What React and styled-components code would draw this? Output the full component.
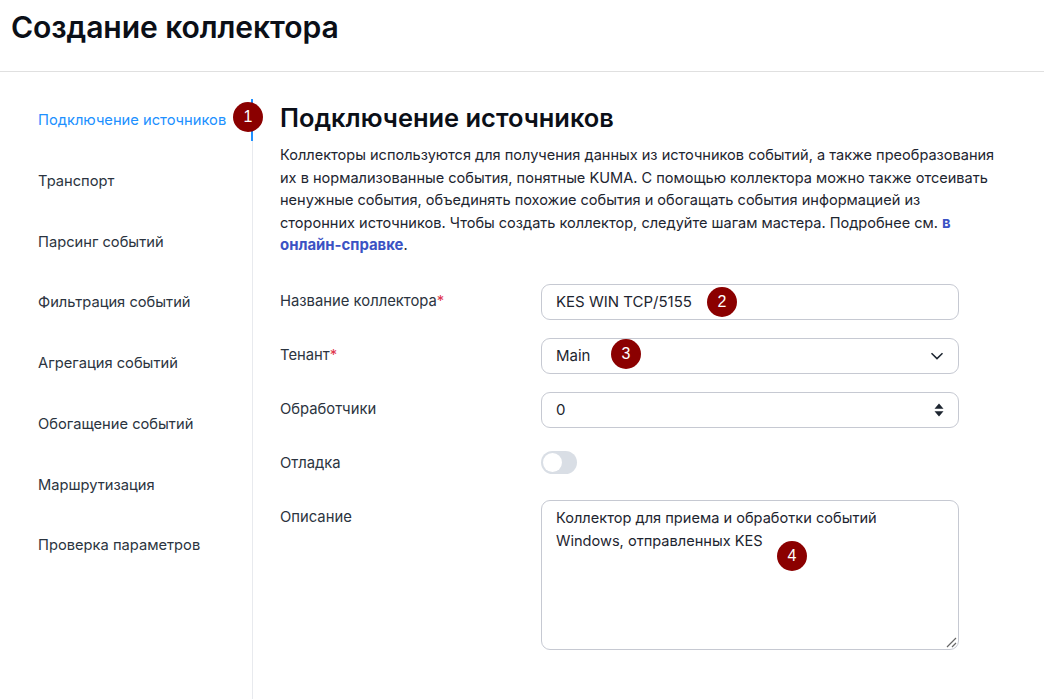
import React from "react";
import styled, { createGlobalStyle } from "styled-components";

const Global = createGlobalStyle`
  html, body { margin: 0; padding: 0; background: #fff; }
  body { font-family: Inter, "Noto Sans", sans-serif; color: #1d2530; overflow: hidden; }
`;
const Page = styled.div`width: 1044px; height: 699px; overflow: hidden; display: flex; flex-direction: column;`;
const Header = styled.header`
  height: 72px; box-sizing: border-box; border-bottom: 1px solid #e0e0e0; flex: none; padding: 8px 0 0 11px;
`;
const Title = styled.h1`margin: 0; font-size: 30.1px; line-height: 38px; font-weight: 600; color: #0b0f17; letter-spacing: -0.1px;`;
const Body = styled.div`display: flex; flex: 1; min-height: 0; padding-top: 27px;`;
const Side = styled.nav`width: 253px; box-sizing: border-box; border-right: 1px solid #e8eaee; flex: none;`;
const Item = styled.div`
  position: relative; height: 42px; margin-bottom: 18.75px; padding-left: 38px; display: flex; align-items: center;
  font-size: 14.7px; color: ${p => (p.$active ? "#2090ff" : "#2b3440")};
  ${p => p.$active && `&::after { content: ""; position: absolute; right: -1px; top: 0; bottom: 0; width: 2px; background: #2090ff; }`}
`;
const ItemText = styled.span`position: relative; top: 0.2px;`;
const Main = styled.main`flex: none; width: 718px; padding-left: 27px;`;
const H2 = styled.h2`margin: 3px 0 0; font-size: 25.45px; line-height: 32px; font-weight: 600; color: #0b0f17;`;
const Para = styled.p`margin: 10px 0 0; width: 716px; font-size: 14.55px; line-height: 22.6px; color: #1d2530;`;
const Link = styled.a`color: #3b52c4; font-weight: 700; font-size: 14.9px;`;
const Form = styled.div`margin-top: 27px; display: grid; grid-template-columns: 261px 418px; row-gap: 18px;`;
const Label = styled.div`font-size: 14.8px; line-height: 20px; padding-top: 7px; color: #2b3440;`;
const Req = styled.span`color: #e0364c;`;
const Field = styled.div`
  position: relative; box-sizing: border-box; width: 418px; height: ${p => p.$h || 36}px; border: 1px solid #c6c9d2; border-radius: 9px;
  padding: 0 14px; display: flex; align-items: center; justify-content: space-between; font-size: 15px; color: #1d2530; background: #fff;
`;
const Area = styled(Field)`display: block; padding: 6px 14px; line-height: 23px; font-size: 14.6px;`;
const Grip = styled.svg`position: absolute; right: 1px; bottom: 1px;`;
const SwitchRow = styled.div`height: 36px; display: flex; align-items: center;`;
const Track = styled.div`width: 36px; height: 23px; border-radius: 12px; background: #d9dee5; position: relative; margin-top: -2px;`;
const Knob = styled.div`position: absolute; left: 2px; top: 2px; width: 19px; height: 19px; border-radius: 50%; background: #fff;`;
const Badge = styled.div`
  position: absolute; width: 30px; height: 30px; border-radius: 50%; background: #8b0000; color: #fff;
  display: flex; align-items: center; justify-content: center; font: 16px "Liberation Sans", sans-serif;
  left: ${p => p.$x}px; top: ${p => p.$y}px;
`;

const items = ["Подключение источников","Транспорт","Парсинг событий","Фильтрация событий","Агрегация событий","Обогащение событий","Маршрутизация","Проверка параметров"];

export default function App() {
  return (
    <Page>
      <Global />
      <Header><Title>Создание коллектора</Title></Header>
      <Body>
        <Side>
          {items.map((t, i) => <Item key={t} $active={i === 0}><ItemText>{t}</ItemText></Item>)}
        </Side>
        <Main>
          <H2>Подключение источников</H2>
          <Para>
            Коллекторы используются для получения данных из источников событий, а также преобразования их в нормализованные события, понятные KUMA. С помощью коллектора можно также отсеивать ненужные события, объединять похожие события и обогащать события информацией из сторонних источников. Чтобы создать коллектор, следуйте шагам мастера. Подробнее см. <Link>в онлайн-справке</Link>.
          </Para>
          <Form>
            <Label>Название коллектора<Req>*</Req></Label>
            <Field>KES WIN TCP/5155</Field>
            <Label>Тенант<Req>*</Req></Label>
            <Field>Main
              <svg width="14" height="8" viewBox="0 0 14 8" fill="none" stroke="#1d2530" strokeWidth="1.5"><path d="M1.5 1.2 7 6.6l5.5-5.4" /></svg>
            </Field>
            <Label>Обработчики</Label>
            <Field>0
              <svg width="10" height="14" viewBox="0 0 10 14" fill="#1d2530"><path d="M5 0.5 9.5 5.8H0.5zM5 13.5 0.5 8.2H9.5z" /></svg>
            </Field>
            <Label>Отладка</Label>
            <SwitchRow><Track><Knob /></Track></SwitchRow>
            <Label>Описание</Label>
            <Area $h={150}>
              Коллектор для приема и обработки событий<br />Windows, отправленных KES
              <Grip width="12" height="12" viewBox="0 0 12 12" stroke="#666" strokeWidth="1.2"><path d="M2 11 11 2M7 11l4-4" /></Grip>
            </Area>
          </Form>
        </Main>
      </Body>
      <Badge $x={233} $y={102}>1</Badge>
      <Badge $x={707} $y={287}>2</Badge>
      <Badge $x={611} $y={339}>3</Badge>
      <Badge $x={777} $y={541}>4</Badge>
    </Page>
  );
}
